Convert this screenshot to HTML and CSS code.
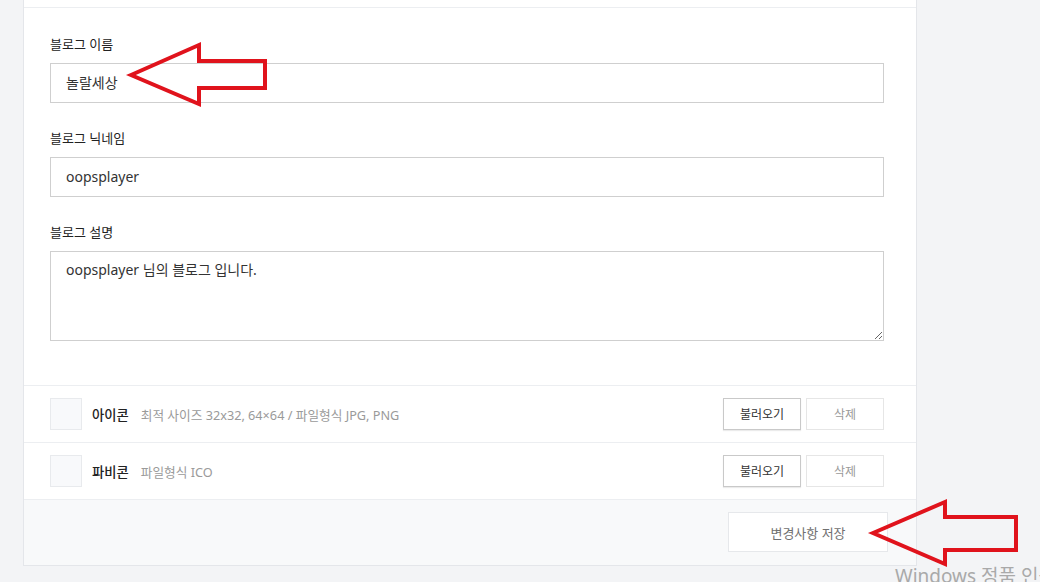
FILE: index.html
```html
<!DOCTYPE html>
<html lang="ko">
<head>
    <meta charset="UTF-8">
    <meta name="viewport" content="width=device-width, initial-scale=1.0">
    <title>블로그 설정</title>
    <link rel="stylesheet" href="styles.css">
</head>
<body>
    <div class="page">
        <div class="card">
            <div class="card-head"></div>

            <div class="fields">
                <div class="field">
                    <label class="field-label" for="blogName">블로그 이름</label>
                    <input class="text-input" id="blogName" type="text" value="놀랄세상">
                </div>
                <div class="field">
                    <label class="field-label" for="blogNick">블로그 닉네임</label>
                    <input class="text-input" id="blogNick" type="text" value="oopsplayer">
                </div>
                <div class="field">
                    <label class="field-label" for="blogDesc">블로그 설명</label>
                    <textarea class="text-area" id="blogDesc">oopsplayer 님의 블로그 입니다.</textarea>
                </div>
            </div>

            <div class="file-row">
                <div class="thumb"></div>
                <span class="file-name">아이콘</span>
                <span class="file-desc">최적 사이즈 32x32, 64×64 / 파일형식 JPG, PNG</span>
                <div class="file-actions">
                    <button class="btn btn-load" type="button">불러오기</button>
                    <button class="btn btn-delete" type="button">삭제</button>
                </div>
            </div>
            <div class="file-row">
                <div class="thumb"></div>
                <span class="file-name">파비콘</span>
                <span class="file-desc">파일형식 ICO</span>
                <div class="file-actions">
                    <button class="btn btn-load" type="button">불러오기</button>
                    <button class="btn btn-delete" type="button">삭제</button>
                </div>
            </div>

            <div class="card-foot">
                <button class="btn-save" type="button">변경사항 저장</button>
            </div>
        </div>
    </div>

    <!-- annotation arrows drawn over the screenshot -->
    <svg class="marks" width="1040" height="582" viewBox="0 0 1040 582">
        <polygon points="131,75 199,45 199,61 265,61 265,88 199,88 199,104" />
        <polygon points="873,533 945,502 945,517 1016,517 1016,550 945,550 945,564" />
    </svg>

    <div class="watermark">Windows 정품 인증</div>
</body>
</html>
```

FILE: styles.css
```css
body {
    margin: 0;
    padding: 0;
    height: 582px;
    overflow: hidden;
    position: relative;
    background: #f3f4f6;
    font-family: 'Noto Sans', 'Noto Sans CJK KR', sans-serif;
    color: #222;
}
.page {
    padding-left: 23px;
}
.card {
    box-sizing: border-box;
    width: 894px;
    margin-top: -40px;
    background: #fff;
    border: 1px solid #e4e6ea;
}
.card-head {
    height: 46px;
    border-bottom: 1px solid #eceef1;
}
.fields {
    padding: 26px 32px 44px 26px;
    border-bottom: 1px solid #eceef1;
    display: flex;
    flex-direction: column;
    gap: 25px;
}
.field {
    display: flex;
    flex-direction: column;
    gap: 9px;
}
.field-label {
    font-size: 13px;
    line-height: 20px;
    color: #222;
}
.text-input,
.text-area {
    box-sizing: border-box;
    width: 100%;
    margin: 0;
    border: 1px solid #cfcfcf;
    border-radius: 0;
    font-family: inherit;
    font-size: 14px;
    color: #333;
    padding: 0 15px;
    outline: none;
}
.text-input {
    height: 40px;
    padding-bottom: 2px;
}
.text-area {
    height: 90px;
    padding-top: 8px;
    line-height: 20px;
    resize: vertical;
}
.file-row {
    display: flex;
    align-items: center;
    padding: 12px 32px 12px 26px;
    border-bottom: 1px solid #eceef1;
}
.thumb {
    box-sizing: border-box;
    width: 32px;
    height: 32px;
    background: #f8f9fb;
    border: 1px solid #e8eaed;
    margin-right: 10px;
}
.file-name {
    font-size: 13.3px;
    font-weight: 500;
    color: #222;
    margin-right: 12px;
}
.file-desc {
    font-size: 12.7px;
    color: #9a9a9a;
}
.file-actions {
    margin-left: auto;
    display: flex;
    gap: 5px;
}
.btn {
    box-sizing: border-box;
    width: 78px;
    height: 32px;
    background: #fff;
    font-family: inherit;
    font-size: 12px;
    cursor: pointer;
}
.btn-load {
    border: 1px solid #c9c9c9;
    box-shadow: 0 1px 1px rgba(0, 0, 0, 0.08);
    color: #333;
}
.btn-delete {
    border: 1px solid #e6e6e6;
    color: #9a9a9a;
}
.card-foot {
    background: #f8f9fa;
    padding: 12px 28px 13px 0;
    display: flex;
    justify-content: flex-end;
}
.btn-save {
    box-sizing: border-box;
    width: 160px;
    height: 40px;
    background: #fff;
    border: 1px solid #e6e8eb;
    font-family: inherit;
    font-size: 13px;
    color: #707070;
    cursor: pointer;
}
.marks {
    position: absolute;
    left: 0;
    top: 0;
    pointer-events: none;
}
.marks polygon {
    fill: none;
    stroke: #e0131c;
    stroke-width: 4;
    stroke-linejoin: miter;
}
.watermark {
    position: absolute;
    left: 895px;
    top: 561px;
    font-family: 'Noto Sans', 'Noto Sans CJK KR', sans-serif;
    font-size: 19px;
    color: #a9a9a9;
    white-space: nowrap;
}
```
